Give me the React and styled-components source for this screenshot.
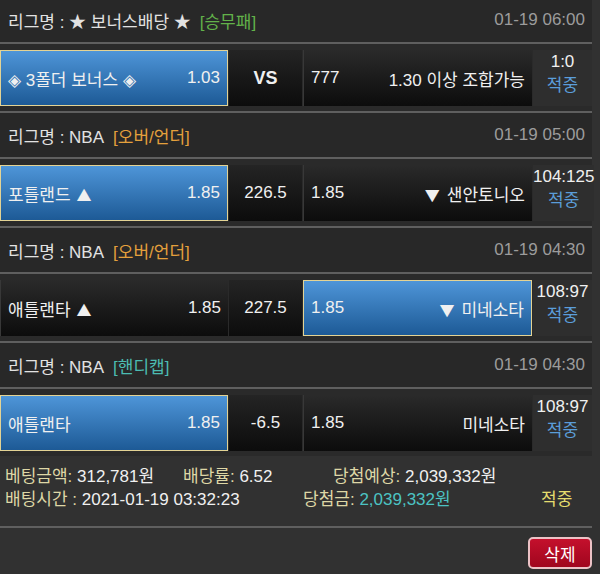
import React from "react";
import styled, { createGlobalStyle, css } from "styled-components";

const GlobalStyle = createGlobalStyle`
  html, body {
    margin: 0;
    padding: 0;
    background: #313131;
  }
  body {
    width: 600px;
    height: 574px;
    overflow: hidden;
    font-family: "Liberation Sans", "Noto Sans CJK KR", sans-serif;
    font-size: 17px;
    color: #f0f0f0;
  }
`;

const TAG_COLORS = {
  승무패: "#62b24a",
  "오버/언더": "#e4a03c",
  핸디캡: "#4cbcb2",
};

const matches = [
  {
    league: "★ 보너스배당 ★",
    tag: "승무패",
    date: "01-19 06:00",
    home: "◈ 3폴더 보너스 ◈",
    homeOdds: "1.03",
    mid: "VS",
    awayOdds: "777",
    away: "1.30 이상 조합가능",
    score: "1:0",
    pick: "home",
  },
  {
    league: "NBA",
    tag: "오버/언더",
    date: "01-19 05:00",
    home: "포틀랜드",
    over: true,
    homeOdds: "1.85",
    mid: "226.5",
    awayOdds: "1.85",
    away: "샌안토니오",
    score: "104:125",
    pick: "home",
  },
  {
    league: "NBA",
    tag: "오버/언더",
    date: "01-19 04:30",
    home: "애틀랜타",
    over: true,
    homeOdds: "1.85",
    mid: "227.5",
    awayOdds: "1.85",
    away: "미네소타",
    score: "108:97",
    pick: "away",
  },
  {
    league: "NBA",
    tag: "핸디캡",
    date: "01-19 04:30",
    home: "애틀랜타",
    homeOdds: "1.85",
    mid: "-6.5",
    awayOdds: "1.85",
    away: "미네소타",
    score: "108:97",
    pick: "home",
  },
];

export default function App() {
  return (
    <>
      <GlobalStyle />
      <Page>
        {matches.map((m, i) => (
          <Match key={i}>
            <LeagueBar>
              <span>
                리그명 : {m.league}
                <Tag color={TAG_COLORS[m.tag]}>[{m.tag}]</Tag>
              </span>
              <DateText>{m.date}</DateText>
            </LeagueBar>
            <BetRow>
              <Cell selected={m.pick === "home"}>
                <span>
                  {m.home}
                  {m.over && <Arrow>▲</Arrow>}
                </span>
                <span>{m.homeOdds}</span>
              </Cell>
              <MidCell bold={m.mid === "VS"}>{m.mid}</MidCell>
              <Cell selected={m.pick === "away"}>
                <span>{m.awayOdds}</span>
                <span>
                  {m.over && <Arrow before>▼</Arrow>}
                  {m.away}
                </span>
              </Cell>
              <Result>
                <span>{m.score}</span>
                <Hit>적중</Hit>
              </Result>
            </BetRow>
          </Match>
        ))}
        <Summary>
          <SummaryLine>
            <Item w={178}>
              <Label>베팅금액:</Label> 312,781원
            </Item>
            <Item w={150}>
              <Label>배당률:</Label> 6.52
            </Item>
            <Item>
              <Label>당첨예상:</Label> 2,039,332원
            </Item>
          </SummaryLine>
          <SummaryLine>
            <Item w={298}>
              <Label>배팅시간 :</Label> 2021-01-19 03:32:23
            </Item>
            <Item w={238}>
              <Label>당첨금:</Label> <Won>2,039,332원</Won>
            </Item>
            <Item>
              <Status>적중</Status>
            </Item>
          </SummaryLine>
        </Summary>
        <Footer>
          <DeleteButton type="button">삭제</DeleteButton>
        </Footer>
      </Page>
    </>
  );
}

const Page = styled.div`
  width: 592px;
  margin-top: -4px;
`;

const Match = styled.section`
  display: flex;
  flex-direction: column;
`;

const LeagueBar = styled.div`
  height: 44px;
  display: flex;
  align-items: center;
  justify-content: space-between;
  padding: 0 7px 0 8px;
  background: #282828;
  border-top: 2px solid #5f5f5f;
  border-bottom: 2px solid #5f5f5f;
  color: #e2e2e2;
`;

const Tag = styled.span`
  margin-left: 9px;
  color: ${p => p.color};
`;

const DateText = styled.span`
  color: #9c9c9c;
`;

const BetRow = styled.div`
  display: grid;
  grid-template-columns: 228px 73px 229px 1fr;
  column-gap: 1px;
  padding: 6px 0;
  height: 55px;
  background: #2a2a2a;
`;

const Cell = styled.div`
  display: flex;
  align-items: center;
  justify-content: space-between;
  padding: 0 7px;
  box-sizing: border-box;
  white-space: nowrap;
  background: linear-gradient(#2a2a2a, #0c0c0c);
  border-left: 1px solid #383838;

  ${p =>
    p.selected &&
    css`
      background: linear-gradient(#4e95d8, #1d5a96);
      border: 1px solid #e3d394;
    `}
`;

const Arrow = styled.span`
  font-family: "Noto Sans CJK KR", sans-serif;
  font-size: 15px;
  margin: ${p => (p.before ? "0 7px 0 0" : "0 0 0 6px")};
`;

const MidCell = styled.div`
  display: flex;
  align-items: center;
  justify-content: center;
  background: linear-gradient(#242424, #0c0c0c);
  font-weight: ${p => (p.bold ? 700 : 400)};
  font-size: ${p => (p.bold ? 18 : 17)}px;
`;

const Result = styled.div`
  display: flex;
  flex-direction: column;
  align-items: center;
  justify-content: center;
  padding-bottom: 8px;
  line-height: 24px;
  white-space: nowrap;
  background: #2e2e2e;
`;

const Hit = styled.span`
  color: #5b9dd9;
`;

const Summary = styled.div`
  display: flex;
  flex-direction: column;
  padding: 9px 0 5px 5px;
  height: 56px;
  border-bottom: 2px solid #5f5f5f;
`;

const SummaryLine = styled.div`
  display: flex;
  line-height: 23px;
  white-space: nowrap;
`;

const Item = styled.span`
  flex: ${p => (p.w ? `0 0 ${p.w}px` : "1")};
`;

const Label = styled.span`
  color: #ded7a6;
`;

const Won = styled.span`
  color: #4cc3c3;
`;

const Status = styled.span`
  color: #e5de6e;
`;

const Footer = styled.div`
  display: flex;
  justify-content: flex-end;
  padding-top: 9px;
`;

const DeleteButton = styled.button`
  width: 64px;
  height: 32px;
  border: 2px solid #ecc2c6;
  border-radius: 5px;
  background: linear-gradient(#c4102c, #a0061e);
  color: #ffffff;
  font-family: inherit;
  font-size: 17px;
  cursor: pointer;
`;
